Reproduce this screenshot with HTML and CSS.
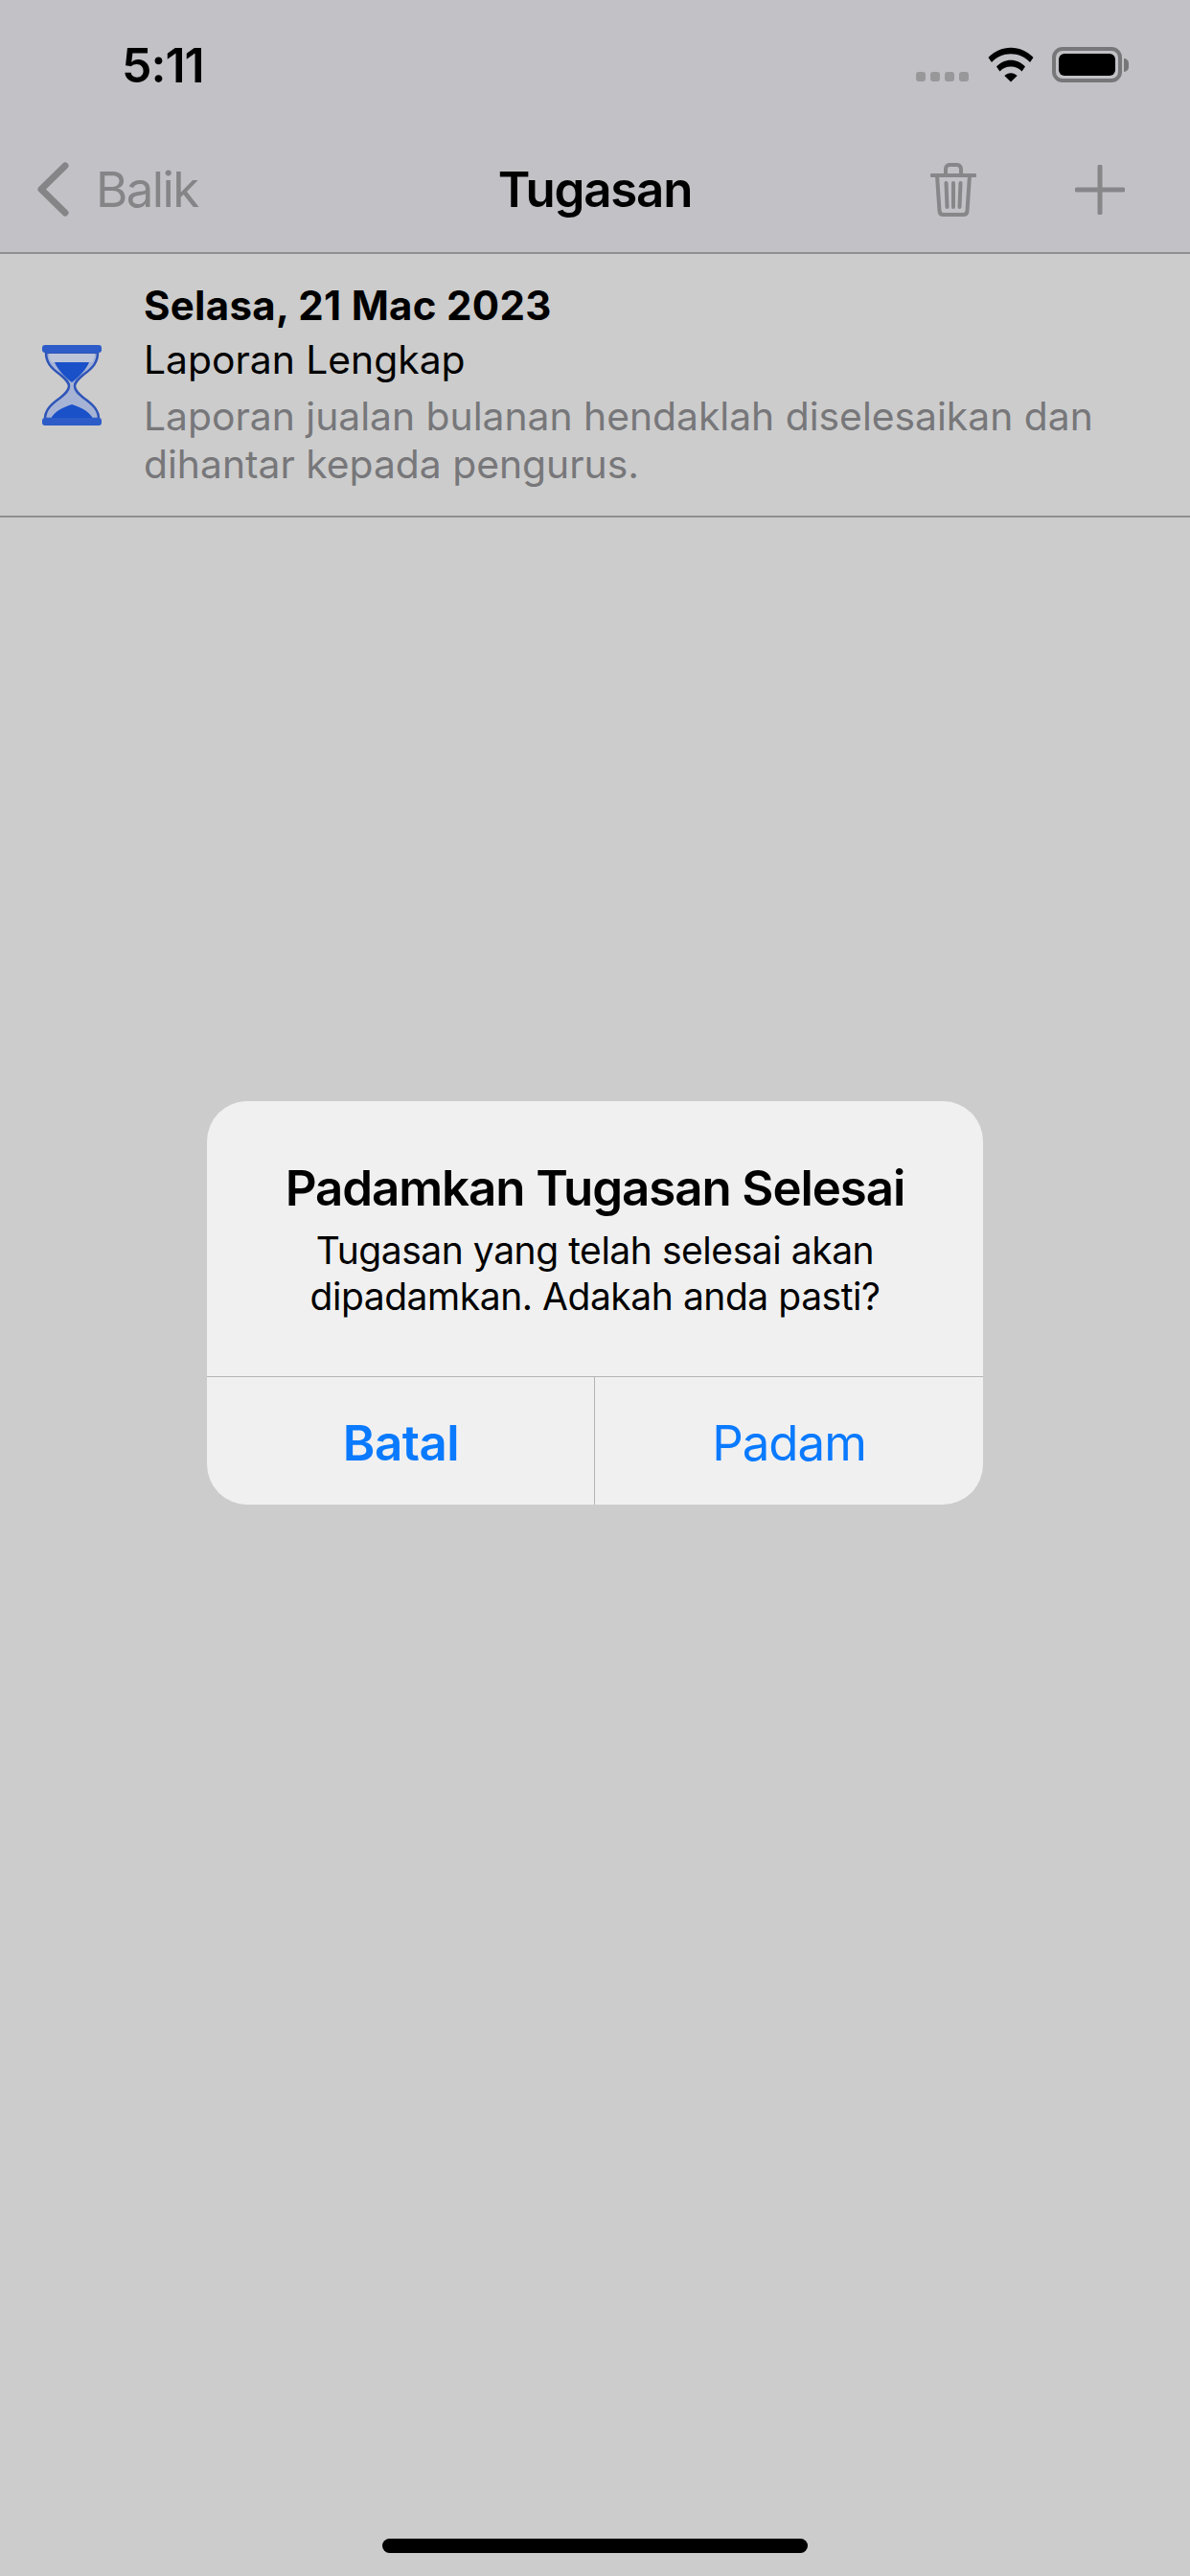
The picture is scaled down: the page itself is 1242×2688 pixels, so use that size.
FILE: index.html
```html
<!DOCTYPE html>
<html lang="ms">
<head>
<meta charset="utf-8">
<title>Tugasan</title>
<link rel="stylesheet" href="styles.css">
</head>
<body>
<div class="screen">
  <header class="top">
    <div class="status">
      <span class="time">5:11</span>
      <div class="status-icons">
        <div class="dots"><i></i><i></i><i></i><i></i></div>
        <svg class="wifi" viewBox="0 0 48 37"><path d="M0.5 13.5C6.5 7.5 15 4 24 4s17.500 3.500 23.500 9.500L44 18C38.800 13 31.700 10 24 10S9.200 13 4 18Z M9 22.300C13 18.500 18.300 16 24 16s11 2.500 15 6.300l-3.500 4.500C32.500 24 28.500 22.300 24 22.300S15.500 24 12.500 26.800Z M17.300 31C19 29.400 21.400 28.400 24 28.400s5 1 6.700 2.600L24 37Z" transform="translate(0 -3.500) scale(1 1.080)"/></svg>
        <div class="battery"><div class="battery-fill"></div></div>
        <div class="battery-cap"></div>
      </div>
    </div>
    <nav class="nav">
      <div class="back">
        <svg class="chevron" viewBox="0 0 33 57"><path d="M29 4 4 28.500 29 53"/></svg>
        <span>Balik</span>
      </div>
      <h1 class="title">Tugasan</h1>
      <div class="actions">
        <svg class="trash" viewBox="0 0 48 56"><path d="M1.500 13h45M16 12V6.500C16 4 17.500 2 20 2h8c2.500 0 4 2 4 4.500V12M7 13l2.500 37c.2 2.500 1.500 4 4 4h21c2.500 0 3.800-1.500 4-4L41 13M16.500 21l1 25M24 21v25M31.500 21l-1 25"/></svg>
        <svg class="plus" viewBox="0 0 52 52"><path d="M26 2v48M2 26h48"/></svg>
      </div>
    </nav>
  </header>

  <section class="task">
    <svg class="hourglass" viewBox="0 0 64 87">
      <path class="glass" d="M5 10H59C59 20 54 26 44 33C38 38 35 41 35 45C35 49 38 52 44 57C54 64 60 70 60 79H4C4 70 10 64 20 57C26 52 29 49 29 45C29 41 26 38 20 33C10 26 5 20 5 10Z"/>
      <path class="glass-top" d="M8 11h48c-.5 3-1 6-2.500 9h-43C9 17 8.500 14 8 11Z"/>
      <path class="sand" d="M14 20h36c-3 7-9 14-18 21-9-7-15-14-18-21Z"/>
      <path class="sand" d="M10 79c3-7 12-12 22-15 10 3 19 8 22 15Z"/>
      <rect class="bar" x="1" y="2" width="62" height="8" rx="3"/>
      <rect class="bar" x="1" y="78" width="62" height="8" rx="3"/>
    </svg>
    <div class="task-text">
      <div class="task-date">Selasa, 21 Mac 2023</div>
      <div class="task-name">Laporan Lengkap</div>
      <div class="task-desc">Laporan jualan bulanan hendaklah diselesaikan dan dihantar kepada pengurus.</div>
    </div>
  </section>

  <div class="home-bar"></div>

  <div class="dialog">
    <div class="dialog-body">
      <h2 class="dialog-title">Padamkan Tugasan Selesai</h2>
      <p class="dialog-msg">Tugasan yang telah selesai akan dipadamkan. Adakah anda pasti?</p>
    </div>
    <div class="dialog-buttons">
      <div class="btn btn-strong">Batal</div>
      <div class="btn btn-plain">Padam</div>
    </div>
  </div>
</div>
</body>
</html>
```
FILE: styles.css
```css
* { box-sizing: border-box; }
html, body { margin: 0; padding: 0; }
body { font-family: Inter, "Liberation Sans", sans-serif; background: #cccccc; }
.screen { position: relative; width: 1242px; height: 2688px; background: #cccccc; display: flex; flex-direction: column; overflow: hidden; }

.top { background: #c1c1c6; border-bottom: 2px solid #8f8f92; height: 265px; display: flex; flex-direction: column; }
.status { height: 132px; display: flex; align-items: flex-start; justify-content: space-between; }
.time { margin: 44px 0 0 127px; font-size: 50px; line-height: 48px; font-weight: 600; color: #000; letter-spacing: -1px; }
.status-icons { display: flex; align-items: flex-start; margin: 49px 64px 0 0; }
.dots { display: flex; gap: 5px; margin: 26px 20px 0 0; }
.dots i { width: 10px; height: 10px; border-radius: 3px; background: #98989b; display: block; }
.wifi { width: 48px; height: 37px; margin-right: 19px; fill: #000; }
.battery { width: 73px; height: 37px; border: 4px solid #77777a; border-radius: 11px; padding: 3px; }
.battery-fill { width: 100%; height: 100%; background: #000; border-radius: 6px; }
.battery-cap { width: 5px; height: 14px; margin: 12px 0 0 2px; background: #77777a; border-radius: 0 7px 7px 0; }

.nav { flex: 1; display: grid; grid-template-columns: 1fr auto 1fr; align-items: center; }
.back { display: flex; align-items: center; padding-left: 39px; color: #858588; font-size: 51px; letter-spacing: -1.6px; }
.chevron { width: 33px; height: 57px; margin-right: 28px; fill: none; stroke: #858588; stroke-width: 7; stroke-linecap: round; stroke-linejoin: round; }
.title { margin: 0; font-size: 51px; font-weight: 600; color: #000; letter-spacing: -1.2px; }
.actions { display: flex; justify-content: flex-end; align-items: center; padding-right: 68px; gap: 103px; }
.trash { width: 48px; height: 56px; fill: none; stroke: #87878a; stroke-width: 4; stroke-linecap: round; stroke-linejoin: round; }
.plus { width: 52px; height: 52px; fill: none; stroke: #87878a; stroke-width: 5; stroke-linecap: round; }

.task { display: flex; align-items: center; height: 275px; border-bottom: 2px solid #8f8f92; padding-left: 43px; }
.hourglass { width: 64px; height: 87px; margin-right: 43px; flex: none; filter: blur(0.5px); }
.glass { fill: #a6b3d5; stroke: #2f55b8; stroke-width: 2.500; }
.glass-top { fill: #bcc4da; }
.sand { fill: #1a50c8; }
.bar { fill: #2d5cc8; }
.task-text { width: 1040px; padding-bottom: 4px; }
.task-date { font-size: 42px; line-height: 58px; font-weight: 700; color: #000; letter-spacing: 0.3px; }
.task-name { font-size: 40.8px; line-height: 58px; margin: -2px 0 5px; color: #000; }
.task-desc { font-size: 40.8px; line-height: 50px; color: #77777a; }

.home-bar { position: absolute; left: 399px; bottom: 24px; width: 444px; height: 15px; background: #000; border-radius: 8px; }

.dialog { position: absolute; left: 216px; top: 1149px; width: 810px; height: 421px; background: #f0f0f0; border-radius: 42px; display: flex; flex-direction: column; overflow: hidden; text-align: center; color: #000; }
.dialog-body { height: 288px; padding: 60px 48px 0; border-bottom: 1px solid #b5b5b5; }
.dialog-title { margin: 0 0 10px; font-size: 51px; line-height: 62px; font-weight: 600; letter-spacing: -1.07px; }
.dialog-msg { margin: 0; font-size: 39px; line-height: 48px; letter-spacing: -0.45px; }
.dialog-buttons { flex: 1; display: grid; grid-template-columns: 1fr 1fr; padding-top: 3px; }
.btn { display: flex; align-items: center; justify-content: center; font-size: 51px; color: #0a7aff; }
.btn-strong { font-weight: 600; letter-spacing: -0.5px; position: relative; }
.btn-strong::after { content: ""; position: absolute; right: 0; top: -3px; bottom: 0; width: 1px; background: #b5b5b5; }
.btn-plain { letter-spacing: -1px; }
```
